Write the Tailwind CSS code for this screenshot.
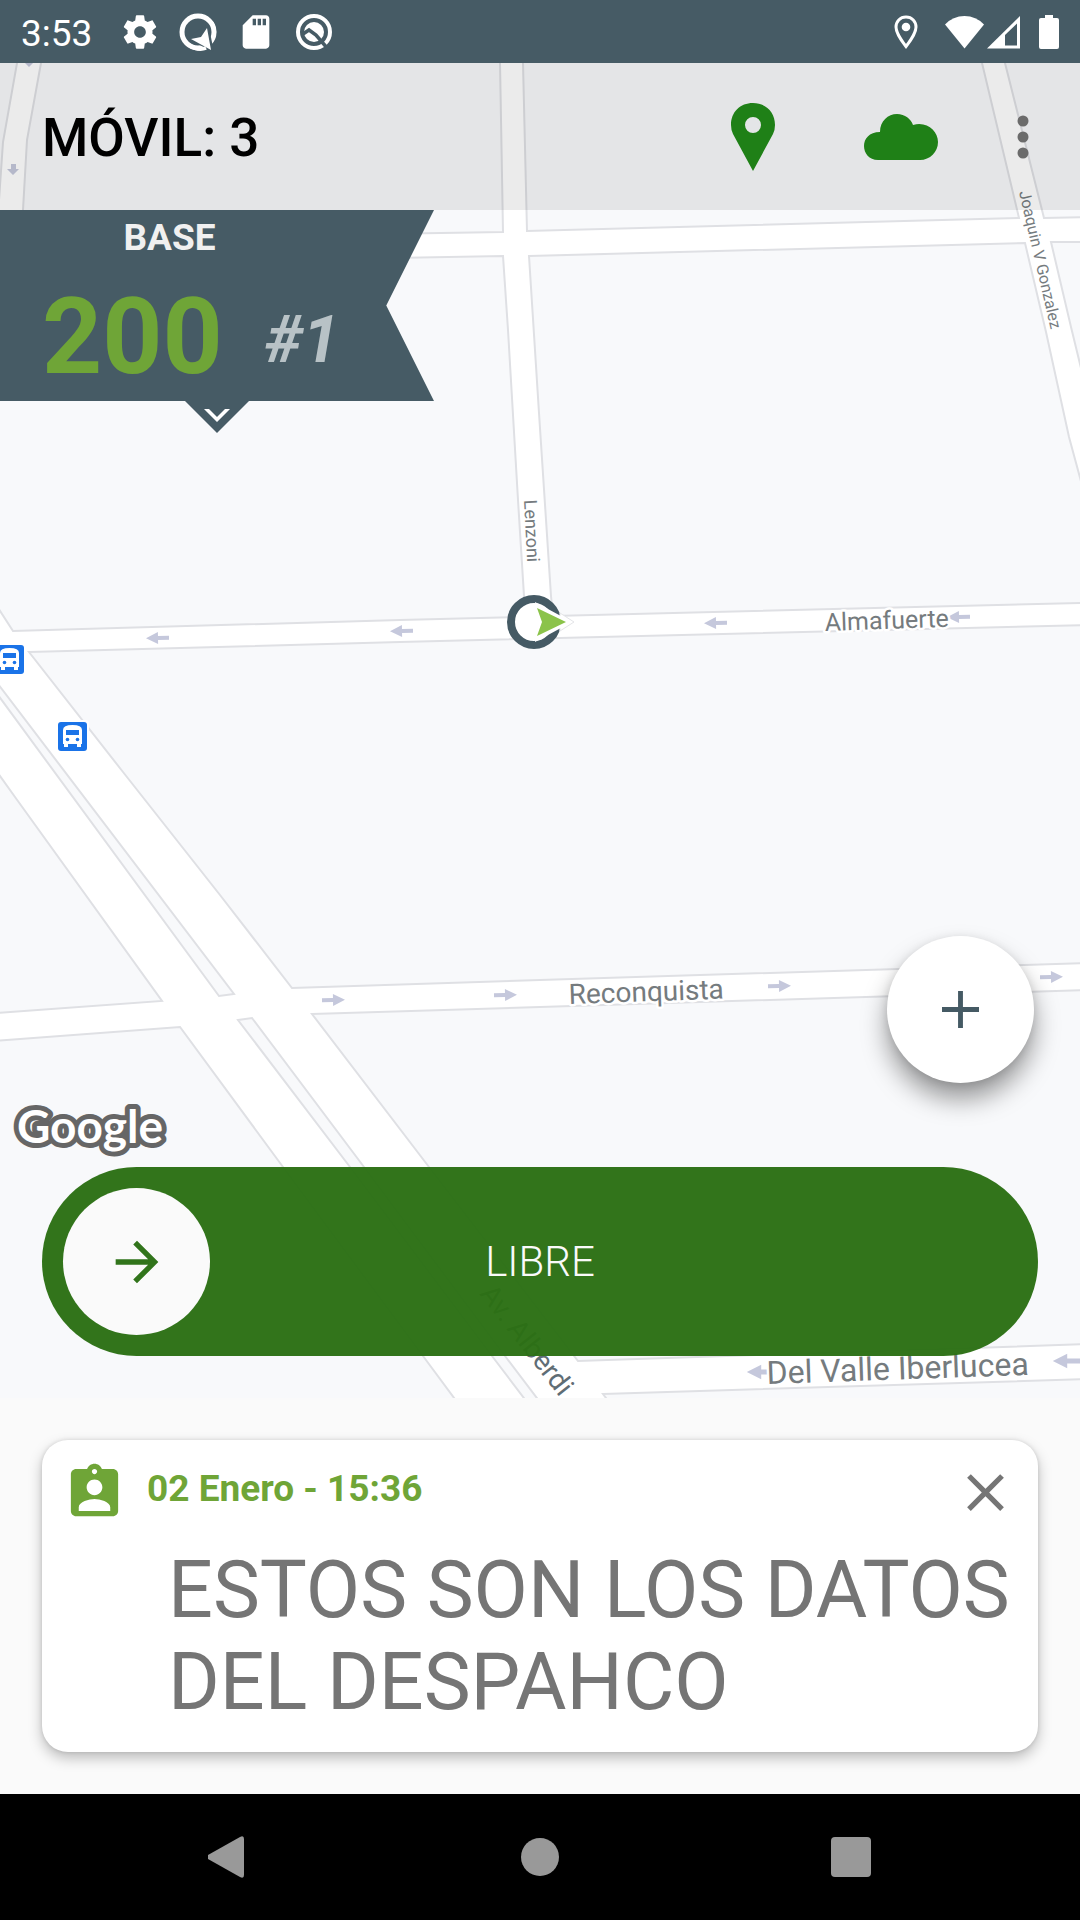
<!DOCTYPE html>
<html lang="es">
    <head>
        <meta charset="UTF-8" />
        <meta name="viewport" content="width=device-width, initial-scale=1.0" />
        <script src="https://cdn.jsdelivr.net/npm/@tailwindcss/browser@4"></script>
        <title>Móvil</title>
    </head>
    <body class="flex min-h-screen flex-col bg-[#fafafa] font-['Roboto',sans-serif]">
        <!-- status bar -->
        <div class="flex h-[63px] items-center justify-between bg-[#465b65] px-[21px] text-white">
            <div class="flex items-center gap-[18px]">
                <span class="w-[81px] pt-1 text-[37px] leading-10">3:53</span>
                <svg class="size-10" viewBox="0 0 24 24" fill="currentColor">
                    <path d="M19.43 12.98c.04-.32.07-.64.07-.98s-.03-.66-.07-.98l2.11-1.65c.19-.15.24-.42.12-.64l-2-3.46c-.12-.22-.39-.3-.61-.22l-2.49 1c-.52-.4-1.08-.73-1.69-.98l-.38-2.65C14.46 2.18 14.25 2 14 2h-4c-.25 0-.46.18-.49.42l-.38 2.65c-.61.25-1.17.59-1.69.98l-2.49-1c-.23-.09-.49 0-.61.22l-2 3.46c-.13.22-.07.49.12.64l2.11 1.65c-.04.32-.07.65-.07.98s.03.66.07.98l-2.11 1.65c-.19.15-.24.42-.12.64l2 3.46c.12.22.39.3.61.22l2.49-1c.52.4 1.08.73 1.69.98l.38 2.65c.03.24.24.42.49.42h4c.25 0 .46-.18.49-.42l.38-2.65c.61-.25 1.17-.59 1.69-.98l2.49 1c.23.09.49 0 .61-.22l2-3.46c.12-.22.07-.49-.12-.64l-2.11-1.65zM12 15.500c-1.930 0-3.500-1.570-3.500-3.500s1.570-3.500 3.500-3.500 3.500 1.570 3.500 3.500-1.570 3.500-3.500 3.500z" />
                </svg>
                <svg class="size-10" viewBox="0 0 40 40">
                    <circle cx="20" cy="20" r="16" fill="none" stroke="#fff" stroke-width="5" />
                    <path d="M9 27 30 11 36 40Z" fill="#465b65" />
                    <path d="M31 8.500Q38 14 35.500 25" fill="none" stroke="#fff" stroke-width="4" />
                    <path d="M13 27 23 25 29 16 33 38Z" fill="#fff" />
                    <path d="M11 33Q20 39 28 36" fill="none" stroke="#fff" stroke-width="4" />
                </svg>
                <svg class="size-10" viewBox="0 0 24 24" fill="currentColor">
                    <path d="M18 2h-8L4.02 8 4 20c0 1.1.9 2 2 2h12c1.1 0 2-.9 2-2V4c0-1.1-.9-2-2-2zm-6 6h-2V4h2v4zm3 0h-2V4h2v4zm3 0h-2V4h2v4z" />
                </svg>
                <svg class="size-10" viewBox="0 0 40 40">
                    <circle cx="20" cy="20" r="16" fill="none" stroke="#fff" stroke-width="4" />
                    <circle cx="20" cy="20" r="10" fill="#fff" />
                    <path d="M9 22 15 18 22 23 34 37" fill="none" stroke="#465b65" stroke-width="3.500" />
                </svg>
            </div>
            <div class="flex items-center">
                <svg class="mr-[27px] h-[34px] w-6" viewBox="0 0 24 34">
                    <path d="M12 2C6 2 2 6.500 2 12c0 7 10 19.500 10 19.500S22 19 22 12C22 6.500 18 2 12 2Z" fill="none" stroke="#fff" stroke-width="3" />
                    <circle cx="12" cy="12" r="4.300" fill="#fff" />
                </svg>
                <svg class="mr-[3px] h-[34px] w-[39px]" viewBox="0 0 39 34" fill="currentColor">
                    <path d="M0 9.500Q8 1 19.500 1T39 9.500L19.500 33.500Z" />
                </svg>
                <svg class="mr-[19px] h-[34px] w-[33px]" viewBox="0 0 33 34">
                    <path d="M33 1V33.500H0Z" fill="#fff" />
                    <path d="M30 8.500V30.500H18V20Z" fill="#465b65" />
                </svg>
                <svg class="h-[34px] w-5" viewBox="0 0 20 34" fill="currentColor">
                    <path d="M6 0h8v3h4a2 2 0 0 1 2 2v27a2 2 0 0 1-2 2H2a2 2 0 0 1-2-2V5a2 2 0 0 1 2-2h4Z" />
                </svg>
            </div>
        </div>

        <main class="relative flex flex-1 flex-col overflow-hidden bg-white">
            <!-- street map -->
            <svg class="absolute inset-0 size-full" viewBox="0 63 1080 1335" preserveAspectRatio="xMidYMid slice">
                <defs>
                    <path id="arrow" d="M12-2H1V-6L-11 0 1 6V2H12Z" fill="#c5c8dc" />
                    <g id="bus">
                        <rect x="-2" y="-2" width="33" height="33" rx="4" fill="#fff" />
                        <rect width="29" height="29" rx="3" fill="#1a73e8" />
                        <path d="M5 8Q5 3 14.500 3T24 8V22H23V25H19V22H10V25H6V22H5Z" fill="#fff" />
                        <path d="M8 8H21V13H8Z" fill="#1a73e8" />
                        <circle cx="9.500" cy="17.500" r="1.800" fill="#1a73e8" />
                        <circle cx="19.500" cy="17.500" r="1.800" fill="#1a73e8" />
                    </g>
                </defs>

                <!-- blocks -->
                <g fill="#f8f9fb" stroke="#dfe0e4" stroke-width="2">
                    <path d="M-5 50H20L17 63 3 142-1 200H-5Z" />
                    <path d="M43 50H500V63L503 232 15 240 23 210 27 140 41 63Z" />
                    <path d="M522 50H979L982 63 1019 218 527 231 523 63Z" />
                    <path d="M1003 50H1090V217L1044 218 1005 63Z" />
                    <path d="M-5 265 503 256 508 330 518 500 524 596V617L400 620 13 631-5 603Z" />
                    <path d="M529 256 1025 243 1046 332 1069 437 1082 485V603L553 616 551 596 539 413Z" />
                    <path d="M1051 242H1090V405L1071 327Z" />
                    <path d="M29 652 400 642 1090 625V963L540 980 292 988 220 895 123 772Z" />
                    <path d="M-5 769 15 797 162 1001-5 1013Z" />
                    <path d="M-5 680 234 994 219 996-5 691Z" />
                    <path d="M238 1020 252 1018 364 1167 505 1356 546 1410H533L492 1356 350 1167Z" />
                    <path d="M-5 1041 180 1027 283 1167 423 1356 463 1410H-5Z" />
                    <path d="M312 1014 540 1007 1090 990V1344L578 1361 429 1167Z" />
                    <path d="M603 1394 1090 1379V1410H615Z" />
                </g>

                <!-- one way arrows -->
                <use href="#arrow" transform="translate(157 638) rotate(-1)" />
                <use href="#arrow" transform="translate(401 631) rotate(-1)" />
                <use href="#arrow" transform="translate(715 623) rotate(-1)" />
                <use href="#arrow" transform="translate(958 617) rotate(-1)" />
                <use href="#arrow" transform="translate(334 1000) rotate(179)" />
                <use href="#arrow" transform="translate(506 995) rotate(179)" />
                <use href="#arrow" transform="translate(780 986) rotate(179)" />
                <use href="#arrow" transform="translate(1052 977) rotate(179)" />
                <use href="#arrow" transform="translate(760 1372) scale(1.200)" />
                <use href="#arrow" transform="translate(1066 1361) scale(1.200)" />
                <path d="M11 164h5v5h3l-6 6-6-6h4Z" fill="#c5c8dc" />
                <path d="M26 56h5v5h4l-6 6-6-6h3Z" fill="#c5c8dc" />

                <!-- street names -->
                <g fill="#757b7e" stroke="#fff" stroke-width="5" stroke-linejoin="round" paint-order="stroke">
                    <text font-size="16" transform="translate(1019 192) rotate(77)" stroke-width="1">Joaquin V Gonzalez</text>
                    <text font-size="18" transform="translate(524 500) rotate(87)" stroke-width="1">Lenzoni</text>
                    <text font-size="25" transform="translate(825 631) rotate(-2)">Almafuerte</text>
                    <text font-size="28" transform="translate(569 1004) rotate(-2)">Reconquista</text>
                    <text font-size="32" transform="translate(767 1384) rotate(-2)">Del Valle Iberlucea</text>
                    <text font-size="28" transform="translate(479 1294) rotate(52)" fill="#5f6d75">Av. Alberdi</text>
                </g>

                <use href="#bus" x="-5" y="645" />
                <use href="#bus" x="58" y="722" />

                <!-- current position -->
                <circle cx="534" cy="622" r="23" fill="#fff" stroke="#455a64" stroke-width="8" />
                <path d="M560 613 574 622 560 631Z" fill="#fff" stroke="#e4e5e8" />
                <path d="M535 602 572 622 535 642 538 622Z" fill="#fff" />
                <path d="M537 608 566 622 537 636 542 622Z" fill="#8bc34a" />

                <text x="17" y="1143" font-family="Lato" font-weight="700" font-size="46" fill="#fff" stroke="#666" stroke-width="10" stroke-linejoin="round" paint-order="stroke">Google</text>
            </svg>

            <header class="relative flex h-[147px] items-center bg-black/8 pr-[10px] pl-[42px]">
                <h1 class="flex-1 pt-1 text-[53px] font-medium text-black">MÓVIL: 3</h1>
                <button type="button" aria-label="Ubicación" class="flex w-[148px] justify-center">
                    <svg class="h-[68px] w-11" viewBox="0 0 44 68" fill="#1f8017">
                        <path fill-rule="evenodd" d="M22 0C9 0 0 9 0 22q0 5 2 9L22 68 42 31q2-4 2-9C44 9 35 0 22 0Zm0 14a8 8 0 1 1 0 16 8 8 0 0 1 0-16Z" />
                    </svg>
                </button>
                <button type="button" aria-label="Conexión" class="flex w-[148px] justify-center">
                    <svg class="h-[46px] w-[74px]" viewBox="0 0 74 46" fill="#1f8017">
                        <path d="M14 46C5 46 0 39 0 32S5 18 16 18C16 7 24 0 33 0c8 0 14 5 16 11 14-4 25 6 25 17 0 10-8 18-18 18Z" />
                    </svg>
                </button>
                <button type="button" aria-label="Más opciones" class="flex w-[95px] justify-center">
                    <svg class="h-11 w-3" viewBox="0 0 12 44" fill="#6b6b6b">
                        <circle cx="6" cy="6" r="5.500" />
                        <circle cx="6" cy="22" r="5.500" />
                        <circle cx="6" cy="38" r="5.500" />
                    </svg>
                </button>
            </header>

            <!-- base -->
            <section class="relative w-[434px] self-start">
                <div class="bg-[#465b65] pt-[6px] pb-[10px] [clip-path:polygon(0_0,100%_0,89%_50%,100%_100%,0_100%)]">
                    <p class="w-[339px] text-center text-[37px] leading-11 font-bold text-[#f0f0f0]">BASE</p>
                    <div class="mt-6 flex items-center gap-[42px] pl-[42px] font-bold">
                        <span class="text-[105px] leading-[107px] text-[#6fa537]">200</span>
                        <span class="pt-1 text-[66px] leading-[66px] text-[#b8c2c6] italic">#1</span>
                    </div>
                </div>
                <button type="button" aria-label="Desplegar base" class="mx-auto block">
                    <svg class="h-8 w-16" viewBox="0 0 64 32">
                        <path d="M0 0H64L32 32Z" fill="#465b65" />
                        <path d="M19 8h5l8 8 8-8h5L32 21Z" fill="#fff" />
                    </svg>
                </button>
            </section>

            <div class="relative mt-auto flex flex-col gap-[84px] px-[42px] pb-[42px]">
                <button type="button" aria-label="Agregar" class="mr-1 flex size-[147px] items-center justify-center self-end rounded-full bg-white shadow-[0_16px_26px_rgba(0,0,0,0.40),0_2px_10px_rgba(0,0,0,0.10)]">
                    <svg class="size-[37px]" viewBox="0 0 38 38" stroke="#455a64" stroke-width="5">
                        <path d="M19 0V38M0 19H38" />
                    </svg>
                </button>
                <button type="button" class="grid grid-cols-[147px_1fr_147px] items-center rounded-full bg-[#2b7014]/97 p-[21px]">
                    <span class="flex size-[147px] items-center justify-center rounded-full bg-[#fafafa]">
                        <svg class="size-16" viewBox="0 0 24 24" fill="#31741b">
                            <path d="M12 4 10.590 5.410 16.170 11H4v2h12.170l-5.580 5.590L12 20l8-8z" />
                        </svg>
                    </span>
                    <span class="text-[42px] font-light text-[#fafafa]">LIBRE</span>
                </button>
            </div>
        </main>

        <!-- dispatch message -->
        <section class="p-[42px]">
            <article class="rounded-[26px] bg-white px-[21px] pt-[21px] pb-6 shadow-[0_6px_14px_rgba(0,0,0,0.25),0_0_4px_rgba(0,0,0,0.12)]">
                <div class="flex items-center gap-[21px]">
                    <svg class="size-[63px]" viewBox="0 0 24 24" fill="#6fa537">
                        <path d="M19 3h-4.180C14.400 1.840 13.300 1 12 1c-1.300 0-2.400.84-2.820 2H5c-1.100 0-2 .9-2 2v14c0 1.100.9 2 2 2h14c1.100 0 2-.9 2-2V5c0-1.100-.9-2-2-2zm-7 0c.55 0 1 .45 1 1s-.45 1-1 1-1-.45-1-1 .45-1 1-1zm0 4c1.660 0 3 1.340 3 3s-1.340 3-3 3-3-1.340-3-3 1.340-3 3-3zm6 12H6v-1.400c0-2 4-3.100 6-3.100s6 1.100 6 3.100V19z" />
                    </svg>
                    <h2 class="flex-1 pb-2 text-[37px] leading-11 font-bold text-[#6fa537]">02 Enero - 15:36</h2>
                    <button type="button" aria-label="Cerrar">
                        <svg class="size-[63px]" viewBox="0 0 24 24" fill="#757575">
                            <path d="M19 6.410 17.590 5 12 10.590 6.410 5 5 6.410 10.590 12 5 17.590 6.410 19 12 13.410 17.590 19 19 17.590 13.410 12z" />
                        </svg>
                    </button>
                </div>
                <p class="mt-5 pl-[105px] text-[79px] leading-[92px] text-[#757575]">ESTOS SON LOS DATOS DEL DESPAHCO</p>
            </article>
        </section>

        <!-- system navigation -->
        <nav class="flex h-[126px] items-center justify-center bg-black">
            <button type="button" aria-label="Atrás" class="flex w-[311px] justify-center">
                <svg class="size-[42px]" viewBox="0 0 42 42" fill="#999">
                    <path d="M0 19 32 1q4-2 4 2V39q0 4-4 2L0 23q-2-2 0-4Z" />
                </svg>
            </button>
            <button type="button" aria-label="Inicio" class="flex w-[311px] justify-center">
                <span class="size-[38px] rounded-full bg-[#999]"></span>
            </button>
            <button type="button" aria-label="Recientes" class="flex w-[311px] justify-center">
                <span class="size-10 rounded bg-[#999]"></span>
            </button>
        </nav>
    </body>
</html>
